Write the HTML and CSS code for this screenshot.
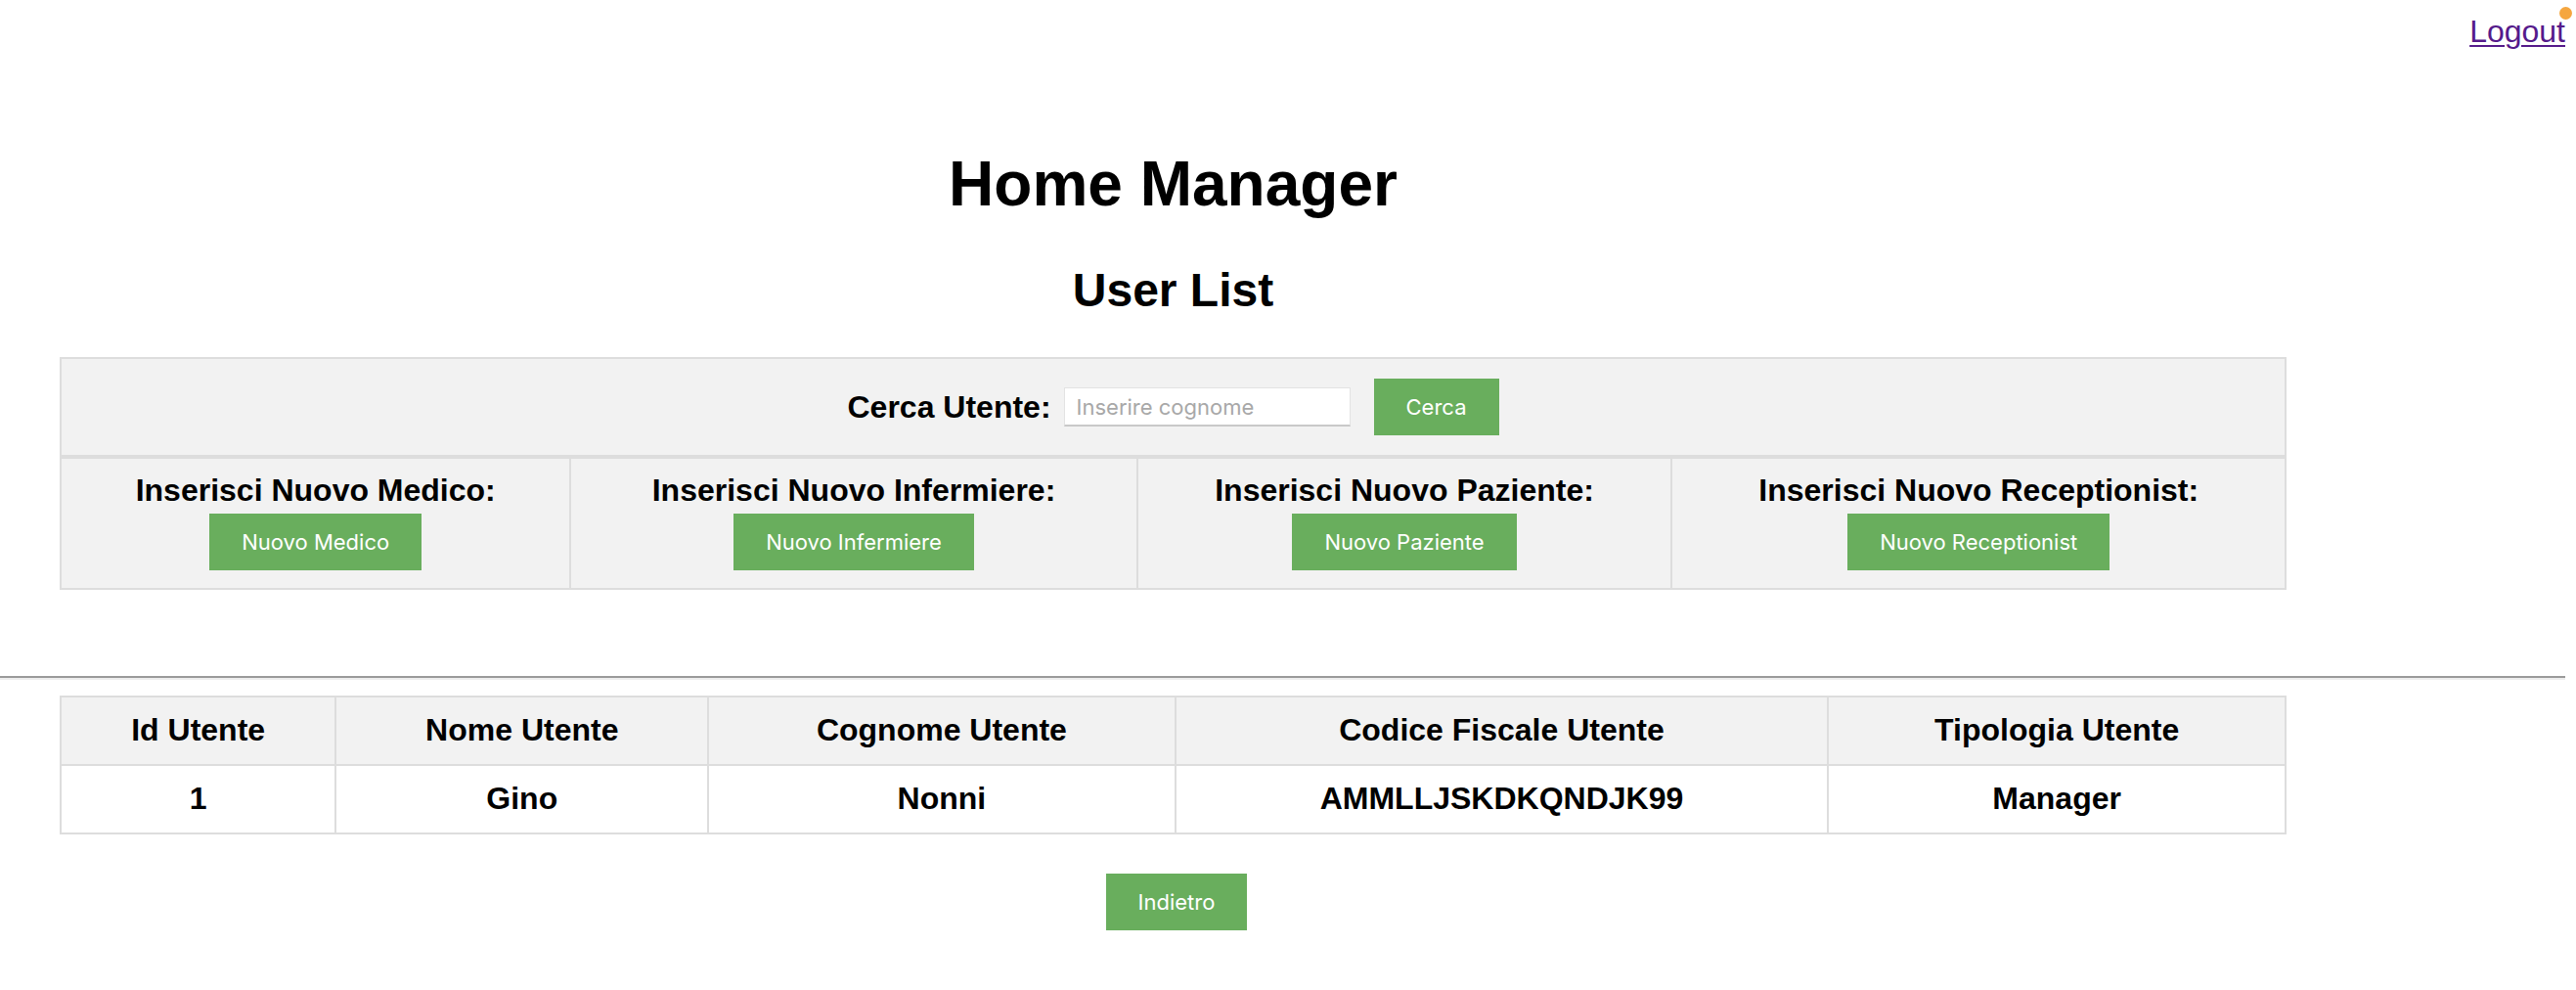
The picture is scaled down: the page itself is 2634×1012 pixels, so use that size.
FILE: index.html
```html
<!DOCTYPE html>
<html lang="it">
<head>
<meta charset="utf-8">
<title>Home Manager</title>
<link rel="stylesheet" href="styles.css">
</head>
<body>
<div class="page">
  <div class="topbar">
    <a class="logout" href="#">Logout</a>
  </div>
  <span class="dot"></span>

  <div class="container">
    <h1 class="title">Home Manager</h1>
    <h2 class="subtitle">User List</h2>

    <form class="search-box">
      <label class="search-label" for="cognome">Cerca Utente:</label>
      <input class="search-input" id="cognome" type="text" placeholder="Inserire cognome">
      <button class="btn" type="button">Cerca</button>
    </form>

    <table class="insert-table">
      <tr>
        <td><span class="insert-label">Inserisci Nuovo Medico:</span><button class="btn insert-btn" type="button">Nuovo Medico</button></td>
        <td><span class="insert-label">Inserisci Nuovo Infermiere:</span><button class="btn insert-btn" type="button">Nuovo Infermiere</button></td>
        <td><span class="insert-label">Inserisci Nuovo Paziente:</span><button class="btn insert-btn" type="button">Nuovo Paziente</button></td>
        <td><span class="insert-label">Inserisci Nuovo Receptionist:</span><button class="btn insert-btn" type="button">Nuovo Receptionist</button></td>
      </tr>
    </table>
  </div>

  <hr class="divider">

  <div class="container">
    <table class="users-table">
      <thead>
        <tr>
          <th>Id Utente</th>
          <th>Nome Utente</th>
          <th>Cognome Utente</th>
          <th>Codice Fiscale Utente</th>
          <th>Tipologia Utente</th>
        </tr>
      </thead>
      <tbody>
        <tr>
          <td>1</td>
          <td>Gino</td>
          <td>Nonni</td>
          <td>AMMLLJSKDKQNDJK99</td>
          <td>Manager</td>
        </tr>
      </tbody>
    </table>

    <div class="back-row">
      <button class="btn" type="button">Indietro</button>
    </div>
  </div>
</div>
</body>
</html>
```

FILE: styles.css
```css
html, body {
  margin: 0;
  padding: 0;
  background: #ffffff;
}

body {
  font-family: "Liberation Sans", Arial, Helvetica, sans-serif;
  color: #000000;
}

.page {
  position: relative;
  margin-right: 11px;
}

.topbar {
  display: flex;
  justify-content: flex-end;
  padding-top: 14px;
  height: 37px;
}

.logout {
  font-size: 32px;
  line-height: 37px;
  color: #551a8b;
  text-decoration: underline;
  text-decoration-thickness: 2px;
  text-underline-offset: 3px;
}

.dot {
  position: absolute;
  top: 7px;
  right: -7px;
  width: 13px;
  height: 13px;
  border-radius: 50%;
  background: #f5a63f;
}

.container {
  margin-left: 61px;
  width: 2277px;
}

.title {
  margin: 100px 0 44px;
  font-size: 64px;
  line-height: 74px;
  font-weight: bold;
  text-align: center;
}

.subtitle {
  margin: 0 0 41px;
  font-size: 48px;
  line-height: 55px;
  font-weight: bold;
  text-align: center;
}

.search-box {
  margin: 0;
  display: flex;
  justify-content: center;
  align-items: center;
  padding: 20px 0;
  background: #f2f2f2;
  border: 2px solid #dddddd;
}

.search-label {
  font-size: 32px;
  line-height: 37px;
  font-weight: bold;
  margin-right: 13px;
}

.search-input {
  box-sizing: border-box;
  width: 293px;
  height: 40px;
  margin: 0 24px 0 0;
  padding: 0 12px;
  background: #ffffff;
  border: 1px solid #e3e3e3;
  border-bottom: 2px solid #c9c9c9;
  font-family: Inter, "Noto Sans", sans-serif;
  font-size: 22px;
  outline: none;
}

.search-input::placeholder {
  color: #a8a8a8;
}

.btn {
  display: inline-block;
  height: 58px;
  padding: 0 33px;
  border: none;
  background: #69ae5d;
  color: #ffffff;
  font-family: Inter, "Noto Sans", sans-serif;
  font-size: 22px;
  line-height: 58px;
  cursor: pointer;
}

.insert-table {
  width: 100%;
  border-collapse: collapse;
  background: #f2f2f2;
  border: 2px solid #dddddd;
}

.insert-table td {
  border: 2px solid #dddddd;
  padding: 14px 16px 18px;
  text-align: center;
  vertical-align: top;
}

.insert-label {
  display: block;
  font-size: 32px;
  line-height: 37px;
  font-weight: bold;
}

.insert-btn {
  margin-top: 5px;
}

.divider {
  margin: 88px 0 16px;
  height: 0;
  border: none;
  border-top: 2px solid #9a9a9a;
  border-bottom: 2px solid #eeeeee;
}

.users-table {
  width: 100%;
  border-collapse: collapse;
  border: 2px solid #dddddd;
}

.users-table th,
.users-table td {
  border: 2px solid #dddddd;
  padding: 15px 16px 16px;
  font-size: 32px;
  line-height: 37px;
  font-weight: bold;
  text-align: center;
}

.users-table th {
  background: #f2f2f2;
}

.users-table td {
  background: #ffffff;
}

.back-row {
  display: flex;
  justify-content: center;
  margin-top: 40px;
  padding-left: 7px;
}
```
